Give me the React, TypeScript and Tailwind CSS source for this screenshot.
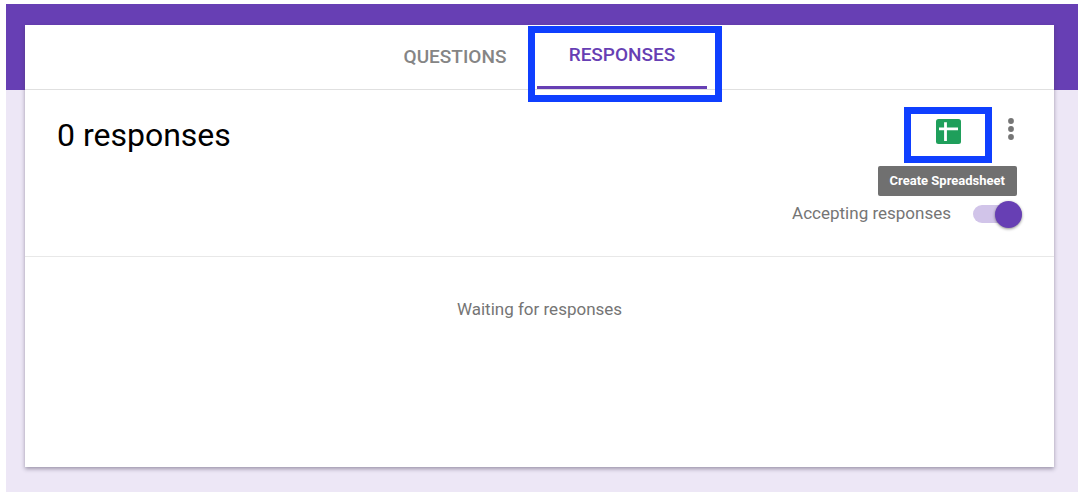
import { useState } from "react";

type Tab = "questions" | "responses";

const tabBase =
  "flex h-full items-center justify-center text-[19px] font-medium";

function Tabs({ tab, onChange }: { tab: Tab; onChange: (t: Tab) => void }) {
  const active = "border-b-3 border-[#673fb4] text-[#673fb4]";
  const idle = "text-[#858585]";
  return (
    <div role="tablist" className="flex h-[65px] justify-center border-b border-[#e0e0e0] pl-px">
      <button
        role="tab"
        aria-selected={tab === "questions"}
        onClick={() => onChange("questions")}
        className={`${tabBase} w-[164px] ${tab === "questions" ? active : idle}`}
      >
        QUESTIONS
      </button>
      <div className="relative h-full">
        <button
          role="tab"
          aria-selected={tab === "responses"}
          onClick={() => onChange("responses")}
          className={`${tabBase} w-[170px] ${tab === "responses" ? active : idle}`}
        >
          RESPONSES
        </button>
        <span className="pointer-events-none absolute top-px -right-[15px] -bottom-[13px] -left-[9px] border-7 border-[#0f3fff]" />
      </div>
    </div>
  );
}

function SheetIcon() {
  return (
    <svg viewBox="0 0 25 25" className="size-[25px]" aria-hidden="true">
      <rect width="25" height="25" rx="2.5" fill="#1f9f5b" />
      <path d="M9.5 3.2V22M3 9.8H22" stroke="#fff" strokeWidth="2.8" fill="none" />
    </svg>
  );
}

function DotsIcon() {
  return (
    <svg viewBox="0 0 6 24" className="h-6 w-[6px]" fill="#757575" aria-hidden="true">
      <circle cx="3" cy="4" r="2.9" />
      <circle cx="3" cy="12" r="2.9" />
      <circle cx="3" cy="20" r="2.9" />
    </svg>
  );
}

export default function App() {
  const [tab, setTab] = useState<Tab>("responses");
  const [accepting, setAccepting] = useState(true);
  return (
    <div className="bg-white pt-1 pr-2 pb-[6px] pl-[6px] font-[Roboto,sans-serif]">
      <div className="bg-[linear-gradient(#673fb4_86px,#ede7f6_86px)] pt-[21px] pr-6 pb-[25px] pl-[19px]">
        <main className="min-h-[442px] bg-white shadow-[0_2px_4px_rgba(60,50,80,0.45)]">
          <Tabs tab={tab} onChange={setTab} />
          <header className="flex h-[167px] items-start justify-between border-b border-[#e8e8e8] pt-[17px] pr-6 pl-8">
            <h1 className="pt-2 text-[32px] leading-10 text-black">0 responses</h1>
            <div className="flex flex-col items-end">
              <div className="flex items-start">
                <div className="relative">
                  <button
                    aria-label="Create Spreadsheet"
                    className="flex h-14 w-[88px] items-start justify-center border-7 border-[#0f3fff] pt-[5px]"
                  >
                    <SheetIcon />
                  </button>
                  <span
                    role="tooltip"
                    className="absolute top-full -right-[25px] mt-[3px] flex h-[30px] items-center rounded-xs bg-[#707070] px-3 text-[13px] font-bold whitespace-nowrap text-white"
                  >
                    Create Spreadsheet
                  </span>
                </div>
                <button aria-label="More options" className="flex h-11 w-[38px] items-center justify-center">
                  <DotsIcon />
                </button>
              </div>
              <label className="mt-[37px] mr-2 flex h-7 items-center gap-[22px] text-[17px] text-[#757575]">
                Accepting responses
                <input
                  type="checkbox"
                  role="switch"
                  checked={accepting}
                  onChange={(e) => setAccepting(e.target.checked)}
                  className="peer sr-only"
                />
                <span className="flex h-[18px] w-[49px] items-center rounded-full bg-[#bdbdbd] peer-checked:justify-end peer-checked:bg-[#d1c4e9]">
                  <span
                    className={`size-[27px] rounded-full shadow-[0_1px_3px_rgba(0,0,0,0.45)] ${
                      accepting ? "bg-[#673fb4]" : "bg-[#fafafa]"
                    }`}
                  />
                </span>
              </label>
            </div>
          </header>
          <p className="pt-10 text-center text-[17px] text-[#757575]">Waiting for responses</p>
        </main>
      </div>
    </div>
  );
}
